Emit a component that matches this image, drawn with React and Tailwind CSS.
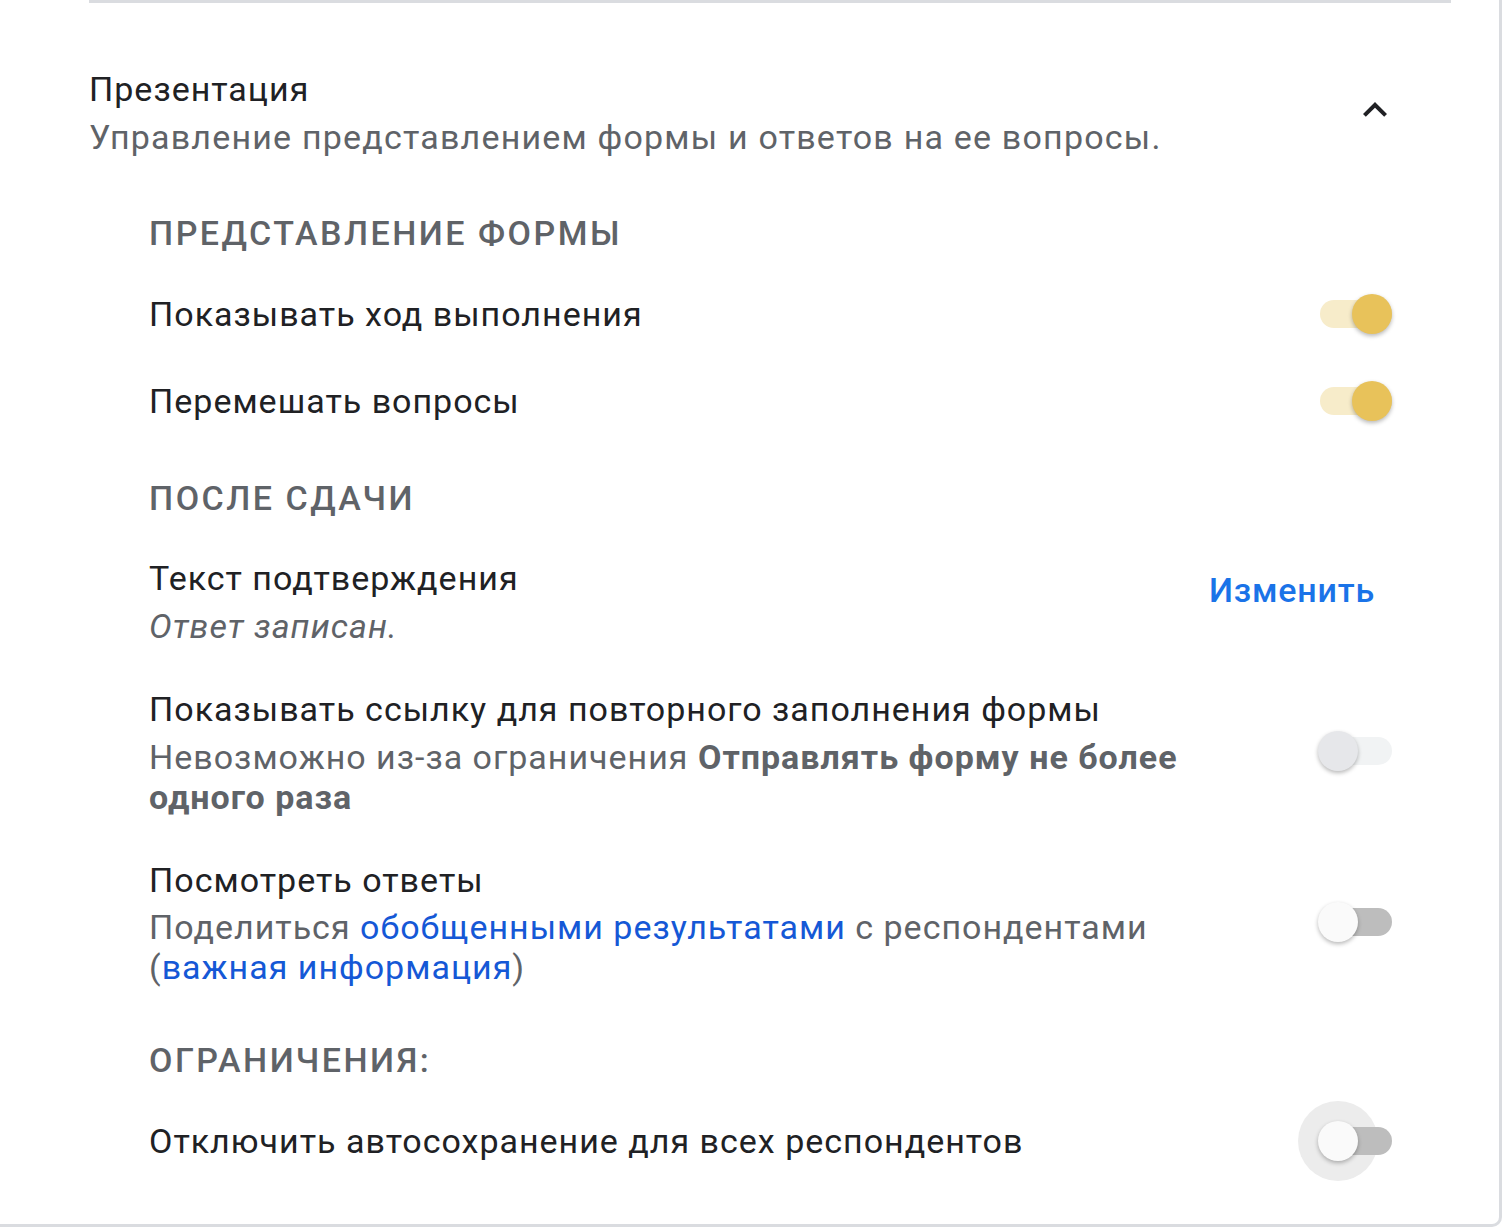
import React from "react";

function Toggle({ state }) {
  const trackCls =
    state === "on"
      ? "bg-[#f7ecca]"
      : state === "disabled"
      ? "bg-[#f1f3f4]"
      : "bg-[#bdbdbd]";
  const thumbCls =
    state === "on"
      ? "bg-[#e8c25a] left-[34px]"
      : state === "disabled"
      ? "bg-[#e6e7ea] left-0"
      : "bg-[#fafafa] left-0";
  return (
    <div className="relative w-[74px] h-[40px] shrink-0">
      {state === "hover" && (
        <div className="absolute left-[-20px] top-[-20px] w-[80px] h-[80px] rounded-full bg-[#ececec]" />
      )}
      <div className={`absolute left-[2px] top-[6px] w-[72px] h-[28px] rounded-full ${trackCls}`} />
      <div
        className={`absolute top-0 w-[40px] h-[40px] rounded-full shadow-[0_2px_4px_rgba(0,0,0,0.28)] ${thumbCls}`}
      />
    </div>
  );
}

function SectionTitle({ children, className = "" }) {
  return (
    <div
      className={`h-[48px] leading-[48px] text-[34px] font-medium tracking-[2.5px] text-[#5f6368] ${className}`}
    >
      {children}
    </div>
  );
}

const title = "h-[48px] leading-[48px] text-[34px] tracking-[1px] text-[#202124]";
const sub = "leading-[40px] text-[34px] tracking-[1px] text-[#5f6368]";

export default function App() {
  const font = { fontFamily: "Roboto, 'Noto Sans', sans-serif" };
  return (
    <div className="w-[1504px] h-[1228px] bg-white overflow-hidden" style={font}>
      <div className="w-[1502px] h-[1227px] border-r-[3px] border-b-[3px] border-[#dadce0] rounded-br-[10px]">
        <div className="ml-[89px] w-[1362px] h-[3px] bg-[#dadce0]" />
        <div className="ml-[89px] w-[1362px]">
          {/* Header */}
          <div className="mt-[62px] flex items-start justify-between">
            <div>
              <div className={title}>Презентация</div>
              <div className="h-[48px] leading-[48px] text-[34px] tracking-[1.2px] text-[#5f6368]">
                Управление представлением формы и ответов на ее вопросы.
              </div>
            </div>
            <div className="mt-[21px] mr-[52px] w-[48px] h-[48px] flex items-center justify-center">
              <svg width="48" height="48" viewBox="0 0 24 24">
                <path d="M7.41 15.41 12 10.83l4.59 4.58L18 14l-6-6-6 6z" fill="#202124" />
              </svg>
            </div>
          </div>

          <div className="pl-[60px] pr-[59px]">
            <SectionTitle className="mt-[48px]">ПРЕДСТАВЛЕНИЕ ФОРМЫ</SectionTitle>

            <div className="mt-[33px] flex items-center justify-between">
              <div className={title}>Показывать ход выполнения</div>
              <Toggle state="on" />
            </div>

            <div className="mt-[39px] flex items-center justify-between">
              <div className={title}>Перемешать вопросы</div>
              <Toggle state="on" />
            </div>

            <SectionTitle className="mt-[49px]">ПОСЛЕ СДАЧИ</SectionTitle>

            <div className="mt-[32px] flex items-start justify-between">
              <div>
                <div className={title}>Текст подтверждения</div>
                <div className={`mt-[4px] h-[40px] italic ${sub}`}>Ответ записан.</div>
              </div>
              <div className="mt-[12px] pr-[17px] h-[48px] leading-[48px] text-[34px] font-medium tracking-[0.8px] text-[#1a73e8]">
                Изменить
              </div>
            </div>

            <div className="mt-[39px] flex items-center justify-between">
              <div className="w-[1080px]">
                <div className={title}>Показывать ссылку для повторного заполнения формы</div>
                <div className={`mt-[4px] ${sub}`}>
                  Невозможно из-за ограничения{" "}
                  <span className="font-bold">Отправлять форму не более одного раза</span>
                </div>
              </div>
              <Toggle state="disabled" />
            </div>

            <div className="mt-[39px] flex items-center justify-between">
              <div className="w-[1080px]">
                <div className={title}>Посмотреть ответы</div>
                <div className={`mt-[3px] ${sub}`}>
                  Поделиться <span className="text-[#1558d6]">обобщенными результатами</span> с
                  респондентами (<span className="text-[#1558d6]">важная информация</span>)
                </div>
              </div>
              <Toggle state="off" />
            </div>

            <SectionTitle className="mt-[49px]">ОГРАНИЧЕНИЯ:</SectionTitle>

            <div className="mt-[33px] flex items-center justify-between">
              <div className={title}>Отключить автосохранение для всех респондентов</div>
              <Toggle state="hover" />
            </div>
          </div>
        </div>
      </div>
    </div>
  );
}
